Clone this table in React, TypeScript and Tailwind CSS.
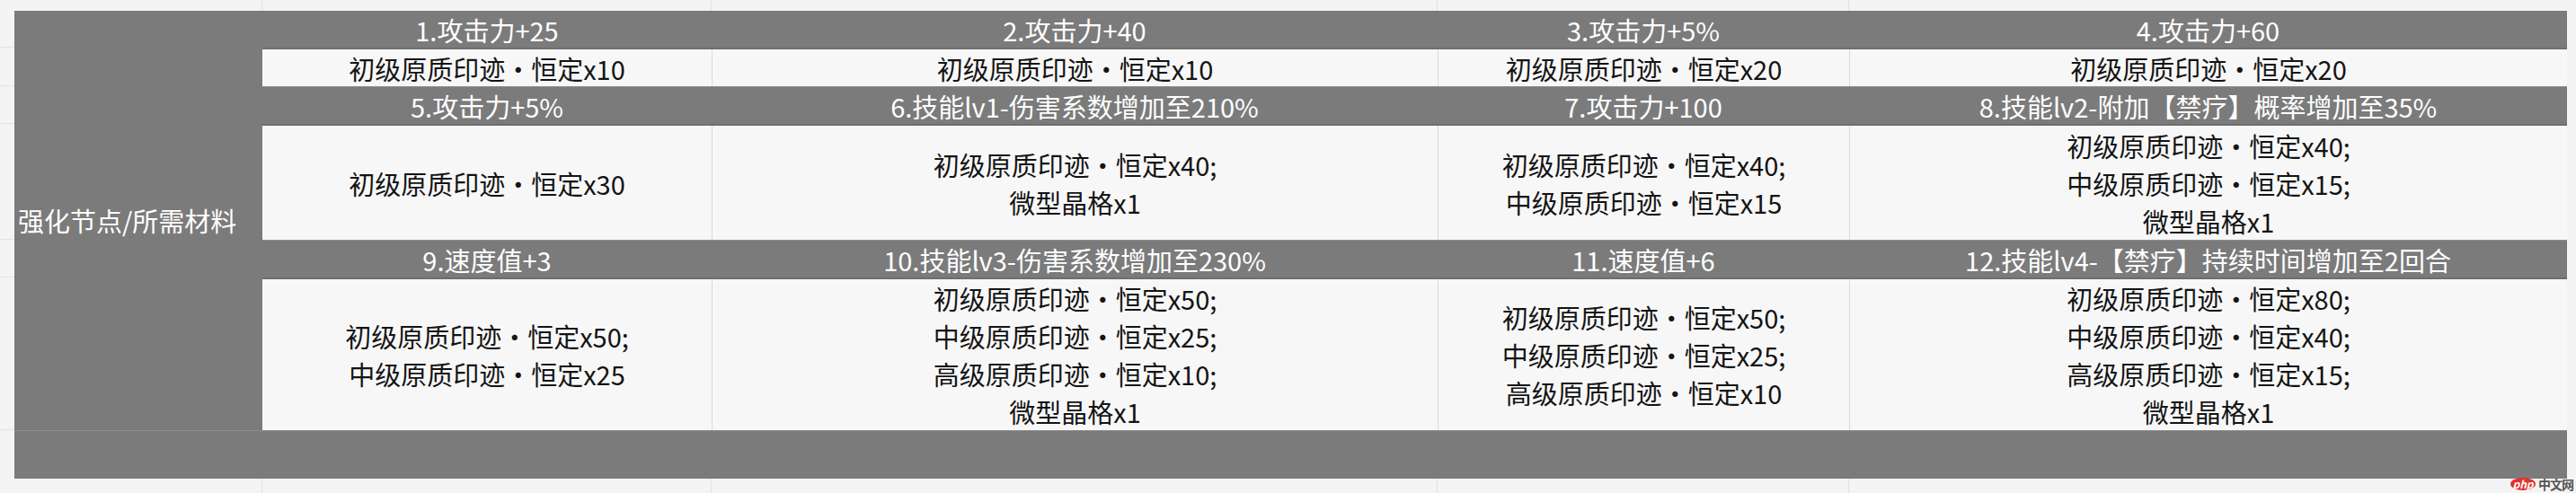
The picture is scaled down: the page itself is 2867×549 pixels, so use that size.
import React from 'react';

interface Node {
  title: string;
  cost: string[];
}

const ROWS: { h: string; c: string; nodes: Node[] }[] = [
  {
    h: 'h-[41px]',
    c: 'h-[43px]',
    nodes: [
      { title: '1.攻击力+25', cost: ['初级原质印迹·恒定x10'] },
      { title: '2.攻击力+40', cost: ['初级原质印迹·恒定x10'] },
      { title: '3.攻击力+5%', cost: ['初级原质印迹·恒定x20'] },
      { title: '4.攻击力+60', cost: ['初级原质印迹·恒定x20'] },
    ],
  },
  {
    h: 'h-[42px]',
    c: 'h-[129px]',
    nodes: [
      { title: '5.攻击力+5%', cost: ['初级原质印迹·恒定x30'] },
      { title: '6.技能lv1-伤害系数增加至210%', cost: ['初级原质印迹·恒定x40;', '微型晶格x1'] },
      { title: '7.攻击力+100', cost: ['初级原质印迹·恒定x40;', '中级原质印迹·恒定x15'] },
      {
        title: '8.技能lv2-附加【禁疗】概率增加至35%',
        cost: ['初级原质印迹·恒定x40;', '中级原质印迹·恒定x15;', '微型晶格x1'],
      },
    ],
  },
  {
    h: 'h-[42px]',
    c: 'h-[170px]',
    nodes: [
      { title: '9.速度值+3', cost: ['初级原质印迹·恒定x50;', '中级原质印迹·恒定x25'] },
      {
        title: '10.技能lv3-伤害系数增加至230%',
        cost: ['初级原质印迹·恒定x50;', '中级原质印迹·恒定x25;', '高级原质印迹·恒定x10;', '微型晶格x1'],
      },
      {
        title: '11.速度值+6',
        cost: ['初级原质印迹·恒定x50;', '中级原质印迹·恒定x25;', '高级原质印迹·恒定x10'],
      },
      {
        title: '12.技能lv4-【禁疗】持续时间增加至2回合',
        cost: ['初级原质印迹·恒定x80;', '中级原质印迹·恒定x40;', '高级原质印迹·恒定x15;', '微型晶格x1'],
      },
    ],
  },
];

const COL_W = ['w-[500px]', 'w-[808px]', 'w-[458px]', 'w-[799px]'];

export default function App() {
  return (
    <div
      className="relative w-[2867px] h-[549px] bg-[#f4f4f4] overflow-hidden flex flex-col"
      style={{ fontFamily: '"Noto Sans CJK SC", "Noto Sans", sans-serif' }}
    >
      {/* sheet gridlines above the table */}
      <div className="h-[12px] flex shrink-0">
        <div className="w-[292px] border-r border-[#e2e2e2]" />
        <div className="w-[500px] border-r border-[#e2e2e2]" />
        <div className="w-[808px] border-r border-[#e2e2e2]" />
        <div className="w-[458px] border-r border-[#e2e2e2]" />
        <div className="flex-1" />
      </div>

      <div className="flex">
        <div className="w-[16px] flex flex-col">
          <div className="h-[41px] border-b border-[#e2e2e2]" />
          <div className="h-[43px] border-b border-[#e2e2e2]" />
          <div className="h-[42px] border-b border-[#e2e2e2]" />
          <div className="h-[129px] border-b border-[#e2e2e2]" />
          <div className="h-[42px] border-b border-[#e2e2e2]" />
          <div className="h-[170px] border-b border-[#e2e2e2]" />
          <div className="h-[54px]" />
        </div>

        <div className="w-[2841px] bg-[#7b7b7b] flex flex-col">
          <div className="flex">
            <div className="w-[276px] h-[467px] flex items-center pl-[4px] text-[29px] leading-none text-white whitespace-nowrap">
              强化节点/所需材料
            </div>
            <div className="flex flex-col">
              {ROWS.map((row, ri) => (
                <React.Fragment key={ri}>
                  <div className={`flex ${row.h}`}>
                    {row.nodes.map((n, i) => (
                      <div
                        key={i}
                        className={`${COL_W[i]} flex items-center justify-center text-[29px] leading-none text-white whitespace-nowrap ${ri > 0 ? 'border-t border-[#8c8c8c]' : ''}`}
                      >
                        <span className="pt-[2px]">{n.title}</span>
                      </div>
                    ))}
                  </div>
                  <div className={`flex ${row.c} bg-[#f7f7f7] border-t-[2px] border-[#6e6e6e]`}>
                    {row.nodes.map((n, i) => (
                      <div
                        key={i}
                        className={`${COL_W[i]} flex flex-col items-center justify-center text-[29px] leading-[42px] text-[#141414] whitespace-nowrap ${i > 0 ? 'border-l border-[#dadada]' : ''}`}
                      >
                        {n.cost.map((line, li) => (
                          <div key={li}>{line}</div>
                        ))}
                      </div>
                    ))}
                  </div>
                </React.Fragment>
              ))}
            </div>
          </div>
          <div className="h-[54px] border-t border-[#8c8c8c]" />
        </div>
        <div className="flex-1" />
      </div>

      <div className="flex-1 flex">
        <div className="w-[292px] border-r border-[#e2e2e2]" />
        <div className="w-[500px] border-r border-[#e2e2e2]" />
        <div className="w-[808px] border-r border-[#e2e2e2]" />
        <div className="w-[458px] border-r border-[#e2e2e2]" />
        <div className="flex-1" />
      </div>

      {/* watermark */}
      <div className="absolute right-[3px] bottom-[3px] flex items-center gap-[3px]">
        <div className="w-[28px] h-[14px] rounded-[50%] bg-[#e2322c] flex items-center justify-center text-[12px] leading-none italic font-bold text-white">
          php
        </div>
        <div className="text-[14px] leading-none font-bold text-[#555] tracking-[-1px]">中文网</div>
      </div>
    </div>
  );
}
